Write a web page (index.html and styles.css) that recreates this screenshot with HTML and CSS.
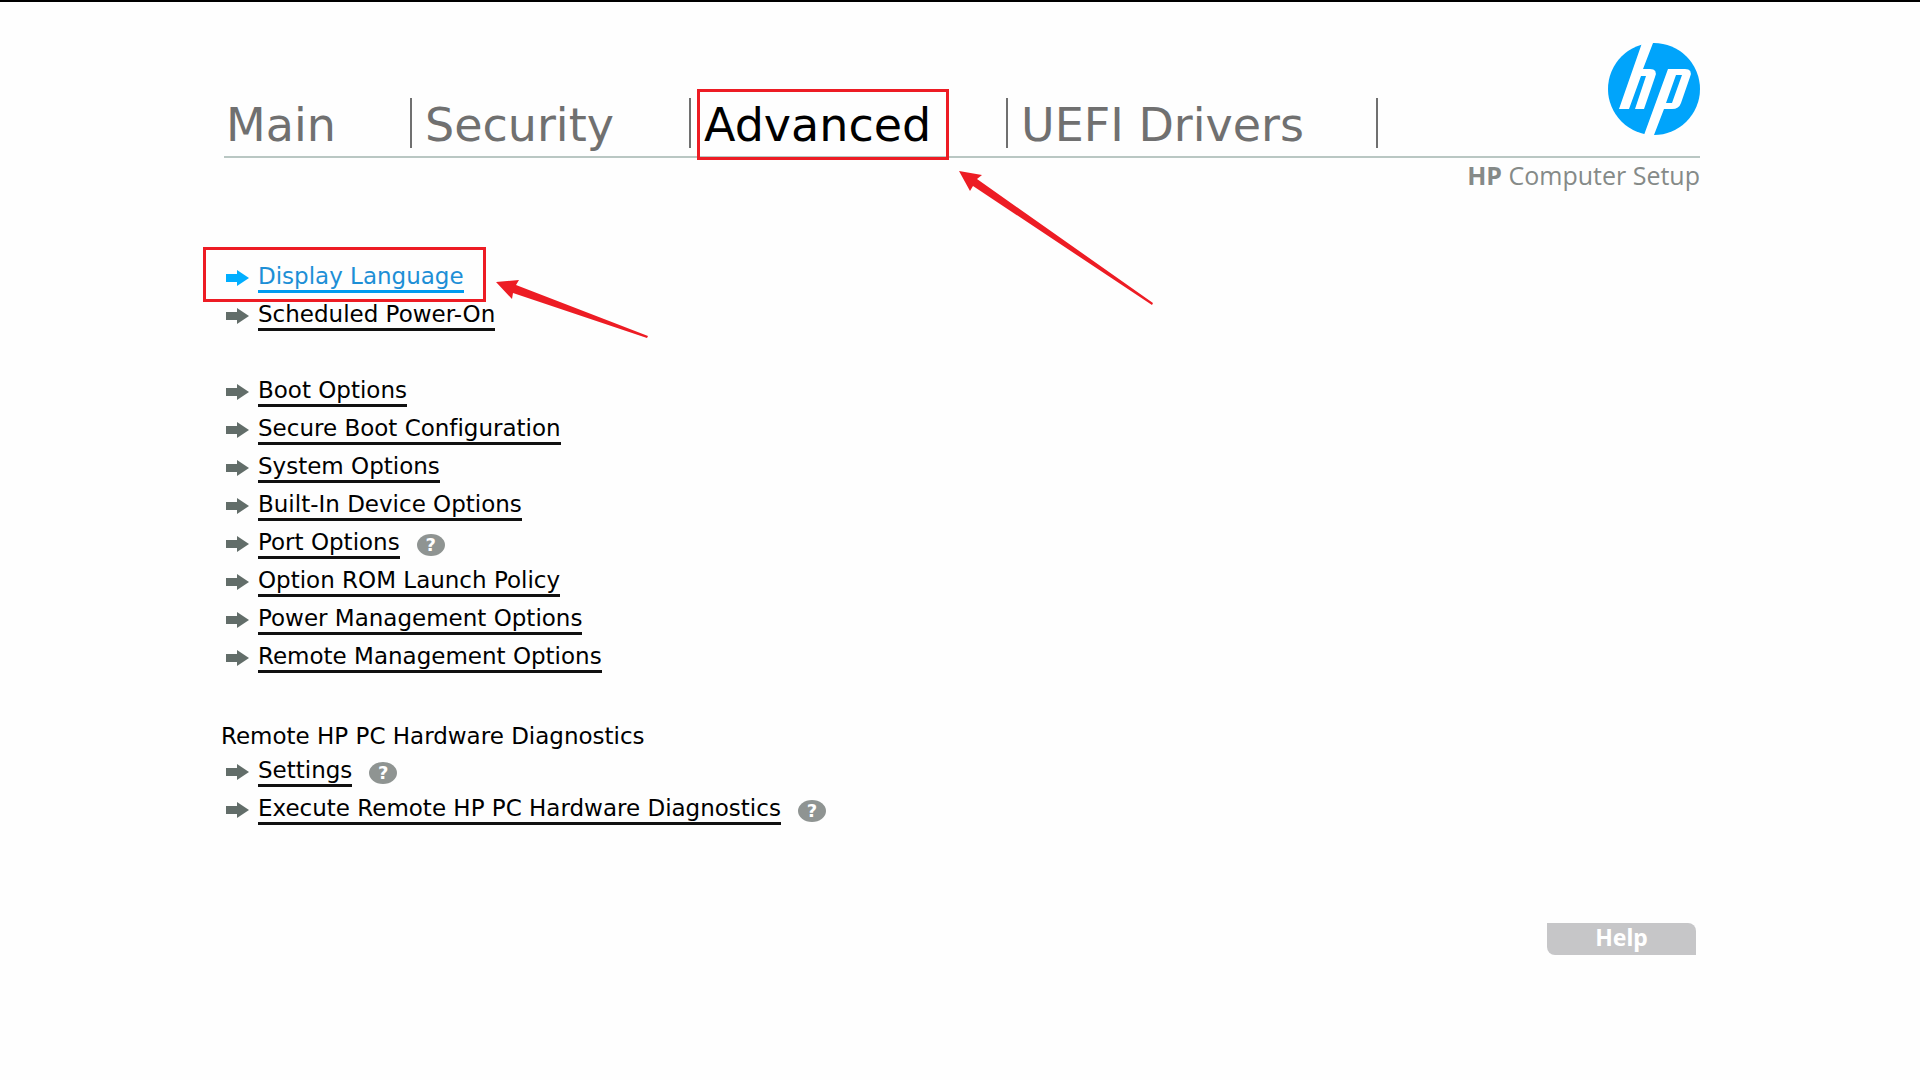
FILE: index.html
```html
<!DOCTYPE html>
<html lang="en">
<head>
    <meta charset="UTF-8">
    <meta name="viewport" content="width=device-width, initial-scale=1.0">
    <title>HP Computer Setup</title>
    <link rel="stylesheet" href="styles.css">
</head>
<body>
    <!-- arrow shared by every menu row -->
    <svg class="defs" width="0" height="0" aria-hidden="true">
        <symbol id="arrow" viewBox="0 0 23 16">
            <path d="M0 4H11V0L23 8L11 16V12H0Z"/>
        </symbol>
    </svg>

    <div class="setup">
        <header>
            <div class="top-bar">
                <nav class="tabs">
                    <a class="tab" href="#main">Main</a>
                    <a class="tab" href="#security">Security</a>
                    <a class="tab active" href="#advanced">Advanced
                        <svg class="pointer pointer-tab" viewBox="0 0 194 134" width="194" height="134" aria-hidden="true">
                            <path d="M0 0L23 4L18 8L194 132L193 134L14 15L11 20Z"/>
                        </svg>
                    </a>
                    <a class="tab" href="#uefi">UEFI Drivers</a>
                </nav>
                <svg class="logo" viewBox="0 0 92 92" width="92" height="92" role="img" aria-label="HP">
                    <circle cx="46" cy="46" r="46" fill="#00a4fb"/>
                    <g fill="#fff">
                        <path d="M34 0H45L35 26H42Q50 26 47 34L36 66H27L38 33H33L21 66H11Z"/>
                        <path fill-rule="evenodd" d="M60 26H77Q85 26 82 34L73 60Q71 66 64 66H56L46 92H36ZM68 32L58 60H64L74 32Z"/>
                    </g>
                </svg>
            </div>
            <p class="product"><b>HP</b> Computer Setup</p>
        </header>

        <main>
            <ul class="menu">
                <li class="selected">
                    <svg class="arrow"><use href="#arrow"/></svg>
                    <a href="#language">Display Language</a>
                    <svg class="pointer pointer-item" viewBox="0 0 152 58" width="152" height="58" aria-hidden="true">
                        <path d="M0 2L23 0L20 5L152 56L151 58L17 13L16 19Z"/>
                    </svg>
                </li>
                <li><svg class="arrow"><use href="#arrow"/></svg><a href="#power-on">Scheduled Power-On</a></li>
            </ul>

            <ul class="menu">
                <li><svg class="arrow"><use href="#arrow"/></svg><a href="#boot">Boot Options</a></li>
                <li><svg class="arrow"><use href="#arrow"/></svg><a href="#secure-boot">Secure Boot Configuration</a></li>
                <li><svg class="arrow"><use href="#arrow"/></svg><a href="#system">System Options</a></li>
                <li><svg class="arrow"><use href="#arrow"/></svg><a href="#devices">Built-In Device Options</a></li>
                <li><svg class="arrow"><use href="#arrow"/></svg><a href="#port">Port Options</a><button class="hint" type="button">?</button></li>
                <li><svg class="arrow"><use href="#arrow"/></svg><a href="#rom">Option ROM Launch Policy</a></li>
                <li><svg class="arrow"><use href="#arrow"/></svg><a href="#power">Power Management Options</a></li>
                <li><svg class="arrow"><use href="#arrow"/></svg><a href="#remote">Remote Management Options</a></li>
            </ul>

            <h2>Remote HP PC Hardware Diagnostics</h2>
            <ul class="menu">
                <li><svg class="arrow"><use href="#arrow"/></svg><a href="#settings">Settings</a><button class="hint" type="button">?</button></li>
                <li><svg class="arrow"><use href="#arrow"/></svg><a href="#execute">Execute Remote HP PC Hardware Diagnostics</a><button class="hint" type="button">?</button></li>
            </ul>
        </main>

        <footer>
            <button class="help" type="button">Help</button>
        </footer>
    </div>
</body>
</html>
```
FILE: styles.css
```css
*,
*::after {
    box-sizing: border-box;
}
body {
    margin: 0;
    border-top: 2px solid #000;
    background: #fefefe;
    color: #000;
    font-family: "DejaVu Sans", sans-serif;
    font-size: 23px;
    font-variant-ligatures: none;
}
.defs {
    position: absolute;
}
.setup {
    padding: 41px 220px 0 224px;
}
.top-bar {
    display: flex;
    align-items: flex-start;
    height: 115px;
    border-bottom: 2px solid #b9c7c3;
}
.tabs {
    display: grid;
    flex: 1;
    grid-template-columns: 188fr 279fr 317fr 370fr;
    margin: 55px 230px 0 0;
}
.tab {
    position: relative;
    height: 50px;
    padding-left: 13px;
    border-right: 2px solid #707070;
    color: #707070;
    font-size: 46px;
    line-height: 54px;
    text-decoration: none;
    white-space: nowrap;
}
.tab:first-child {
    padding-left: 2px;
}
.tab.active {
    color: #000;
}
/* red frames and pointers */
.tab.active::after,
.selected::after {
    content: "";
    position: absolute;
    border: 3px solid #ed1c24;
}
.tab.active::after {
    top: -9px;
    left: 6px;
    width: 252px;
    height: 71px;
}
.selected::after {
    top: -10px;
    left: -21px;
    width: 283px;
    height: 55px;
}
.pointer {
    position: absolute;
    fill: #ed1c24;
}
.pointer-tab {
    top: 73px;
    left: 268px;
}
.pointer-item {
    top: 23px;
    left: 272px;
}
.logo {
    flex: none;
}
.product {
    margin: 0;
    color: #858a88;
    font-family: "Open Sans", sans-serif;
    font-size: 25px;
    line-height: 34px;
    text-align: right;
}
main {
    padding-top: 65px;
}
.menu {
    margin: 0 0 38px;
    padding: 0;
    list-style: none;
}
.menu li {
    position: relative;
    display: flex;
    align-items: center;
    height: 38px;
}
.menu a {
    padding-top: 2px;
    border-bottom: 3px solid #111;
    color: #000;
    line-height: 28px;
    text-decoration: none;
    white-space: nowrap;
}
.arrow {
    width: 23px;
    height: 16px;
    margin: 4px 9px 0 2px;
    fill: #626d69;
}
.menu .selected a {
    border-color: #009bf0;
    color: #1d8fd6;
}
.selected .arrow {
    fill: #00aeff;
}
.hint {
    width: 28px;
    height: 22px;
    margin: 6px 0 0 17px;
    padding: 0;
    border: 0;
    border-radius: 50%;
    background: #8f9492;
    color: #fff;
    font: bold 18px/22px "DejaVu Sans", sans-serif;
}
h2 {
    margin: 0 0 0 -3px;
    padding-top: 8px;
    font-size: 23px;
    font-weight: normal;
    line-height: 30px;
}
footer {
    display: flex;
    justify-content: flex-end;
    padding: 58px 4px 0 0;
}
.help {
    width: 149px;
    height: 32px;
    padding: 0 0 4px;
    border: 0;
    border-radius: 0 8px 0 8px;
    background: #c6c6c8;
    color: #fff;
    font: bold 23px/28px "Noto Sans", sans-serif;
}
```
